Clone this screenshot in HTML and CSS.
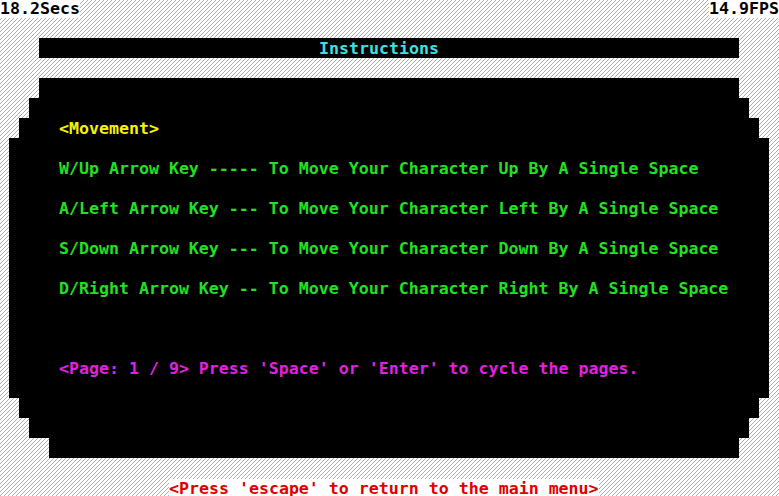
FILE: index.html
```html
<!DOCTYPE html>
<html lang="en">
<head>
<meta charset="utf-8">
<title>Instructions</title>
<link rel="stylesheet" href="styles.css">
</head>
<body>
<div class="screen">
  <div class="stats">
    <span class="stat">18.2Secs</span>
    <span class="stat">14.9FPS</span>
  </div>
  <div class="title-bar"><span class="title">Instructions</span></div>
  <div class="panel">
    <p class="heading">&lt;Movement&gt;</p>
    <p class="line">W/Up Arrow Key ----- To Move Your Character Up By A Single Space</p>
    <p class="line">A/Left Arrow Key --- To Move Your Character Left By A Single Space</p>
    <p class="line">S/Down Arrow Key --- To Move Your Character Down By A Single Space</p>
    <p class="line">D/Right Arrow Key -- To Move Your Character Right By A Single Space</p>
    <p class="pager">&lt;Page: 1 / 9&gt; Press 'Space' or 'Enter' to cycle the pages.</p>
  </div>
  <div class="footer"><span class="hint">&lt;Press 'escape' to return to the main menu&gt;</span></div>
</div>
</body>
</html>
```
FILE: styles.css
```css
html, body {
  margin: 0;
  padding: 0;
}
body {
  width: 779px;
  height: 496px;
  overflow: hidden;
  background-color: #ffffff;
  background-image: url("data:image/svg+xml,%3Csvg xmlns='http://www.w3.org/2000/svg' width='4' height='4' shape-rendering='crispEdges'%3E%3Cpath d='M3 0h1v1H3zM2 1h1v1H2zM1 2h1v1H1zM0 3h1v1H0z' fill='%23b0b0b0'/%3E%3C/svg%3E");
  background-size: 4px 4px;
  font-family: "DejaVu Sans Mono", "Liberation Mono", monospace;
  font-size: 16.6px;
  font-weight: bold;
}
.screen {
  display: flex;
  flex-direction: column;
}
.stats {
  display: flex;
  justify-content: space-between;
  height: 18px;
  line-height: 18px;
}
.stat {
  background: #ffffff;
  color: #000000;
  white-space: pre;
}
.title-bar {
  margin: 20px 0 0 39px;
  width: 700px;
  height: 20px;
  line-height: 19px;
  background: #000000;
  padding: 1px 0 0 280px;
  box-sizing: border-box;
}
.title {
  color: #3ee0e0;
}
.panel {
  margin: 20px 0 0 9px;
  width: 760px;
  height: 380px;
  box-sizing: border-box;
  padding: 41px 0 0 50px;
  background: #000000;
  clip-path: polygon(
    30px 0, 730px 0, 730px 20px, 740px 20px, 740px 40px, 750px 40px, 750px 60px, 760px 60px,
    760px 320px, 750px 320px, 750px 340px, 740px 340px, 740px 360px, 730px 360px, 730px 380px,
    40px 380px, 40px 360px, 20px 360px, 20px 340px, 10px 340px, 10px 320px, 0 320px,
    0 60px, 10px 60px, 10px 40px, 20px 40px, 20px 20px, 30px 20px
  );
  line-height: 20px;
}
.panel p {
  margin: 0 0 20px 0;
  white-space: pre;
}
.heading {
  color: #f4f400;
}
.line {
  color: #22e022;
}
.panel .pager {
  margin-top: 60px;
  color: #e022e0;
}
.footer {
  margin-top: 20px;
  padding: 1px 0 0 169px;
  line-height: 20px;
}
.hint {
  background: #ffffff;
  color: #e00000;
  white-space: pre;
}
```
